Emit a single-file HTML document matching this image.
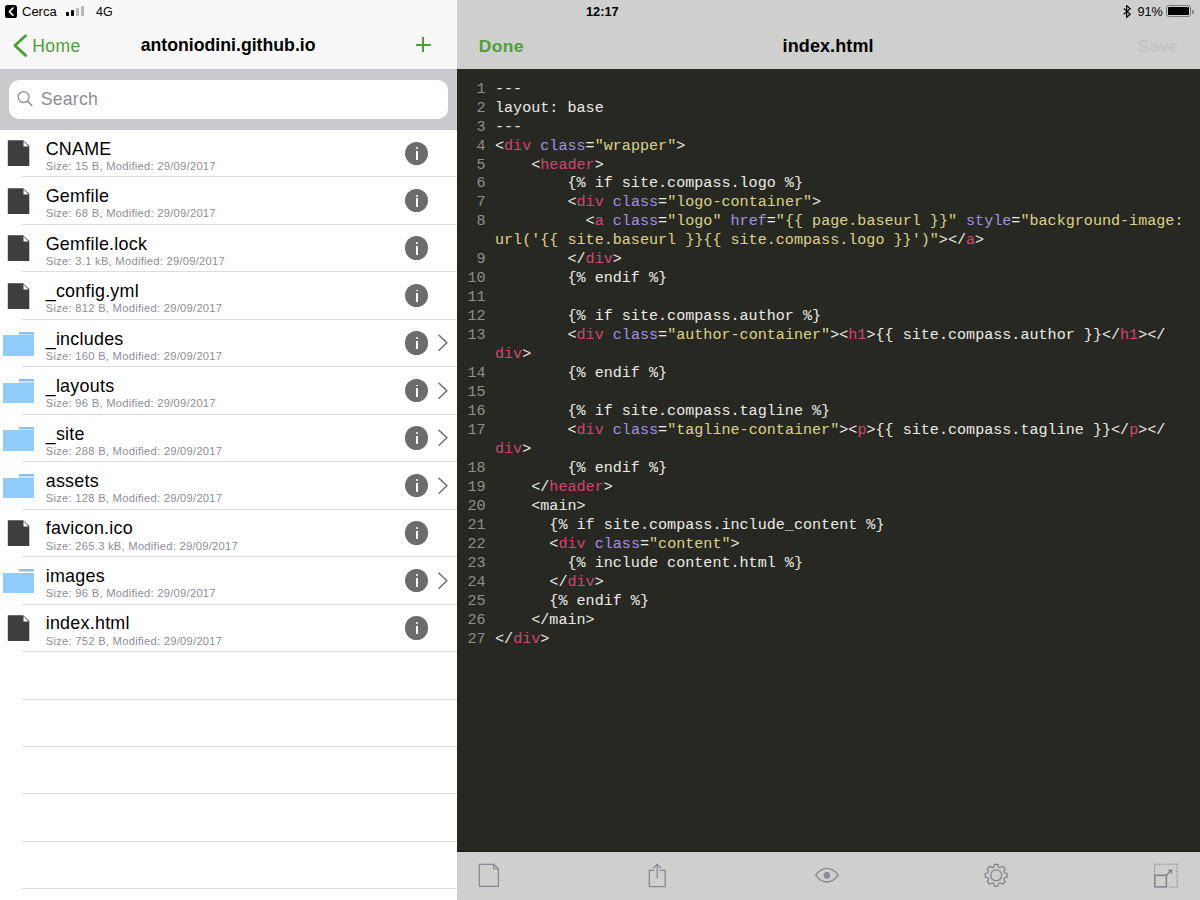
<!DOCTYPE html>
<html><head><meta charset="utf-8"><title>index.html</title>
<style>
*{margin:0;padding:0;box-sizing:border-box}
html,body{width:1200px;height:900px;overflow:hidden;background:#fff;font-family:"Liberation Sans",sans-serif}
body{position:relative}
.abs{position:absolute}
.tx{position:absolute;white-space:pre;line-height:1}
#left{position:absolute;left:0;top:0;width:456.5px;height:900px;background:#fff;overflow:hidden}
#lnav{position:absolute;left:0;top:0;width:456.5px;height:69px;background:#f8f8f8}
#searchbg{position:absolute;left:0;top:69px;width:456.5px;height:60.5px;background:#c9c9ce}
#sfield{position:absolute;left:9px;top:80px;width:439px;height:39px;background:#fff;border-radius:10px}
#rnav{position:absolute;left:456.5px;top:0;width:743.5px;height:69px;background:#cfcfcd}
#code{position:absolute;left:456.5px;top:69px;width:743.5px;height:783.5px;background:#272822}
#tbar{position:absolute;left:456.5px;top:851px;width:743.5px;height:49px;background:#cfcfcd;border-top:1px solid #1a1a16}
.sep{position:absolute;left:22px;width:434.5px;height:1px;background:#dcdcde}
.cl{position:absolute;left:495px;font-family:"Liberation Mono",monospace;font-size:15.1px;line-height:1;color:#ececE6;white-space:pre}
.ln{position:absolute;left:448px;width:37.5px;text-align:right;font-family:"Liberation Mono",monospace;font-size:15.1px;line-height:1;color:#8f908a;white-space:pre}
.t{color:#d4446f}.a{color:#a190e6}.s{color:#dbd486}
</style></head><body>
<div id="left">
<div id="lnav"></div>
<div id="searchbg"></div><div id="sfield"></div>
<div class="abs" style="left:4.6px;top:5px;width:12.9px;height:12.8px;background:#000;border-radius:2.6px"></div>
<svg class="abs" style="left:4.5px;top:5px" width="13" height="13" viewBox="0 0 13 13"><path d="M7.9 3.1 L4.4 6.6 L7.9 10.1" stroke="#fff" stroke-width="1.6" fill="none" stroke-linecap="round" stroke-linejoin="round"/></svg>
<div class="tx" style="left:22.00px;top:5.10px;font-size:13px;color:#000;font-weight:normal;">Cerca</div>

<div class="abs" style="left:66px;top:11.5px;width:3.3px;height:4.5px;background:#000;border-radius:0.8px"></div>
<div class="abs" style="left:71px;top:9.5px;width:3.3px;height:6.5px;background:#000;border-radius:0.8px"></div>
<div class="abs" style="left:76px;top:7.5px;width:3.3px;height:8.5px;background:#b8b8b8;border-radius:0.8px"></div>
<div class="abs" style="left:81px;top:5.5px;width:3.3px;height:10.5px;background:#b8b8b8;border-radius:0.8px"></div>
<div class="tx" style="left:96.00px;top:5.52px;font-size:12.5px;color:#000;font-weight:normal;">4G</div>

<svg class="abs" style="left:10px;top:30px" width="24" height="32" viewBox="0 0 24 32"><path d="M15.6 5.7 L4.9 15.5 L15.6 25.4" stroke="#4aa137" stroke-width="2.8" fill="none" stroke-linecap="round" stroke-linejoin="round"/></svg>
<div class="tx" style="left:32.20px;top:37.90px;font-size:17.6px;color:#4aa137;font-weight:normal;letter-spacing:0.35px;">Home</div>

<div class="tx" style="left:140.70px;top:37.42px;font-size:17.7px;color:#000;font-weight:bold;">antoniodini.github.io</div>

<div class="abs" style="left:415.5px;top:43.5px;width:15.3px;height:2px;background:#4aa137"></div>
<div class="abs" style="left:422px;top:37px;width:2px;height:14.8px;background:#4aa137"></div>
<svg class="abs" style="left:14px;top:88px" width="22" height="22" viewBox="0 0 22 22"><circle cx="9.6" cy="9.1" r="5.4" stroke="#8e8e93" stroke-width="1.3" fill="none"/><path d="M13.5 13 L17.8 17.4" stroke="#8e8e93" stroke-width="1.5" stroke-linecap="round"/></svg>
<div class="tx" style="left:40.80px;top:90.82px;font-size:17.7px;color:#8e8e93;font-weight:normal;letter-spacing:0.2px;">Search</div>

<div class="sep" style="top:176px"></div>
<svg class="abs" style="left:7px;top:140.20px" width="24" height="28" viewBox="0 0 24 28"><path d="M0.8 0.3 H16.1 L22.3 6 V25.9 H0.8 Z" fill="#3e3e41"/><path d="M16.5 1.3 V6.4 H21.4 Z" fill="#fff"/></svg>
<div class="tx" style="left:45.70px;top:140.75px;font-size:17.9px;color:#000;font-weight:normal;letter-spacing:0.25px;">CNAME</div>

<div class="tx" style="left:45.80px;top:161.02px;font-size:11.2px;color:#8e8e93;font-weight:normal;letter-spacing:0.26px;">Size: 15 B, Modified: 29/09/2017</div>

<div class="abs" style="left:405px;top:141.50px;width:23.4px;height:23.4px;border-radius:50%;background:#6c6c6e"></div>
<div class="abs" style="left:415.75px;top:147.20px;width:1.9px;height:1.9px;border-radius:50%;background:#fff"></div>
<div class="abs" style="left:415.85px;top:151.00px;width:1.7px;height:8.6px;background:#fff"></div>
<div class="sep" style="top:224px"></div>
<svg class="abs" style="left:7px;top:187.67px" width="24" height="28" viewBox="0 0 24 28"><path d="M0.8 0.3 H16.1 L22.3 6 V25.9 H0.8 Z" fill="#3e3e41"/><path d="M16.5 1.3 V6.4 H21.4 Z" fill="#fff"/></svg>
<div class="tx" style="left:45.70px;top:188.21px;font-size:17.9px;color:#000;font-weight:normal;letter-spacing:0.25px;">Gemfile</div>

<div class="tx" style="left:45.80px;top:208.49px;font-size:11.2px;color:#8e8e93;font-weight:normal;letter-spacing:0.26px;">Size: 68 B, Modified: 29/09/2017</div>

<div class="abs" style="left:405px;top:188.97px;width:23.4px;height:23.4px;border-radius:50%;background:#6c6c6e"></div>
<div class="abs" style="left:415.75px;top:194.67px;width:1.9px;height:1.9px;border-radius:50%;background:#fff"></div>
<div class="abs" style="left:415.85px;top:198.47px;width:1.7px;height:8.6px;background:#fff"></div>
<div class="sep" style="top:271px"></div>
<svg class="abs" style="left:7px;top:235.13px" width="24" height="28" viewBox="0 0 24 28"><path d="M0.8 0.3 H16.1 L22.3 6 V25.9 H0.8 Z" fill="#3e3e41"/><path d="M16.5 1.3 V6.4 H21.4 Z" fill="#fff"/></svg>
<div class="tx" style="left:45.70px;top:235.68px;font-size:17.9px;color:#000;font-weight:normal;letter-spacing:0.25px;">Gemfile.lock</div>

<div class="tx" style="left:45.80px;top:255.95px;font-size:11.2px;color:#8e8e93;font-weight:normal;letter-spacing:0.26px;">Size: 3.1 kB, Modified: 29/09/2017</div>

<div class="abs" style="left:405px;top:236.43px;width:23.4px;height:23.4px;border-radius:50%;background:#6c6c6e"></div>
<div class="abs" style="left:415.75px;top:242.13px;width:1.9px;height:1.9px;border-radius:50%;background:#fff"></div>
<div class="abs" style="left:415.85px;top:245.93px;width:1.7px;height:8.6px;background:#fff"></div>
<div class="sep" style="top:319px"></div>
<svg class="abs" style="left:7px;top:282.60px" width="24" height="28" viewBox="0 0 24 28"><path d="M0.8 0.3 H16.1 L22.3 6 V25.9 H0.8 Z" fill="#3e3e41"/><path d="M16.5 1.3 V6.4 H21.4 Z" fill="#fff"/></svg>
<div class="tx" style="left:45.70px;top:283.15px;font-size:17.9px;color:#000;font-weight:normal;letter-spacing:0.25px;">_config.yml</div>

<div class="tx" style="left:45.80px;top:303.42px;font-size:11.2px;color:#8e8e93;font-weight:normal;letter-spacing:0.26px;">Size: 812 B, Modified: 29/09/2017</div>

<div class="abs" style="left:405px;top:283.90px;width:23.4px;height:23.4px;border-radius:50%;background:#6c6c6e"></div>
<div class="abs" style="left:415.75px;top:289.60px;width:1.9px;height:1.9px;border-radius:50%;background:#fff"></div>
<div class="abs" style="left:415.85px;top:293.40px;width:1.7px;height:8.6px;background:#fff"></div>
<div class="sep" style="top:366px"></div>
<div class="abs" style="left:3px;top:335.17px;width:31px;height:20.5px;background:#8fccf9"></div>
<div class="abs" style="left:19px;top:331.67px;width:15px;height:2.2px;background:#87c2ee"></div>
<div class="abs" style="left:19px;top:333.87px;width:15px;height:1.3px;background:#c6e5fc"></div>
<svg class="abs" style="left:436px;top:333.37px" width="14" height="20" viewBox="0 0 14 20"><path d="M2.5 1.8 L10.8 9.75 L2.5 17.7" stroke="#6e6e72" stroke-width="1.5" fill="none"/></svg>
<div class="tx" style="left:45.70px;top:330.62px;font-size:17.9px;color:#000;font-weight:normal;letter-spacing:0.25px;">_includes</div>

<div class="tx" style="left:45.80px;top:350.89px;font-size:11.2px;color:#8e8e93;font-weight:normal;letter-spacing:0.26px;">Size: 160 B, Modified: 29/09/2017</div>

<div class="abs" style="left:405px;top:331.37px;width:23.4px;height:23.4px;border-radius:50%;background:#6c6c6e"></div>
<div class="abs" style="left:415.75px;top:337.07px;width:1.9px;height:1.9px;border-radius:50%;background:#fff"></div>
<div class="abs" style="left:415.85px;top:340.87px;width:1.7px;height:8.6px;background:#fff"></div>
<div class="sep" style="top:414px"></div>
<div class="abs" style="left:3px;top:382.63px;width:31px;height:20.5px;background:#8fccf9"></div>
<div class="abs" style="left:19px;top:379.13px;width:15px;height:2.2px;background:#87c2ee"></div>
<div class="abs" style="left:19px;top:381.33px;width:15px;height:1.3px;background:#c6e5fc"></div>
<svg class="abs" style="left:436px;top:380.83px" width="14" height="20" viewBox="0 0 14 20"><path d="M2.5 1.8 L10.8 9.75 L2.5 17.7" stroke="#6e6e72" stroke-width="1.5" fill="none"/></svg>
<div class="tx" style="left:45.70px;top:378.08px;font-size:17.9px;color:#000;font-weight:normal;letter-spacing:0.25px;">_layouts</div>

<div class="tx" style="left:45.80px;top:398.35px;font-size:11.2px;color:#8e8e93;font-weight:normal;letter-spacing:0.26px;">Size: 96 B, Modified: 29/09/2017</div>

<div class="abs" style="left:405px;top:378.83px;width:23.4px;height:23.4px;border-radius:50%;background:#6c6c6e"></div>
<div class="abs" style="left:415.75px;top:384.53px;width:1.9px;height:1.9px;border-radius:50%;background:#fff"></div>
<div class="abs" style="left:415.85px;top:388.33px;width:1.7px;height:8.6px;background:#fff"></div>
<div class="sep" style="top:461px"></div>
<div class="abs" style="left:3px;top:430.10px;width:31px;height:20.5px;background:#8fccf9"></div>
<div class="abs" style="left:19px;top:426.60px;width:15px;height:2.2px;background:#87c2ee"></div>
<div class="abs" style="left:19px;top:428.80px;width:15px;height:1.3px;background:#c6e5fc"></div>
<svg class="abs" style="left:436px;top:428.30px" width="14" height="20" viewBox="0 0 14 20"><path d="M2.5 1.8 L10.8 9.75 L2.5 17.7" stroke="#6e6e72" stroke-width="1.5" fill="none"/></svg>
<div class="tx" style="left:45.70px;top:425.55px;font-size:17.9px;color:#000;font-weight:normal;letter-spacing:0.25px;">_site</div>

<div class="tx" style="left:45.80px;top:445.82px;font-size:11.2px;color:#8e8e93;font-weight:normal;letter-spacing:0.26px;">Size: 288 B, Modified: 29/09/2017</div>

<div class="abs" style="left:405px;top:426.30px;width:23.4px;height:23.4px;border-radius:50%;background:#6c6c6e"></div>
<div class="abs" style="left:415.75px;top:432.00px;width:1.9px;height:1.9px;border-radius:50%;background:#fff"></div>
<div class="abs" style="left:415.85px;top:435.80px;width:1.7px;height:8.6px;background:#fff"></div>
<div class="sep" style="top:509px"></div>
<div class="abs" style="left:3px;top:477.57px;width:31px;height:20.5px;background:#8fccf9"></div>
<div class="abs" style="left:19px;top:474.07px;width:15px;height:2.2px;background:#87c2ee"></div>
<div class="abs" style="left:19px;top:476.27px;width:15px;height:1.3px;background:#c6e5fc"></div>
<svg class="abs" style="left:436px;top:475.77px" width="14" height="20" viewBox="0 0 14 20"><path d="M2.5 1.8 L10.8 9.75 L2.5 17.7" stroke="#6e6e72" stroke-width="1.5" fill="none"/></svg>
<div class="tx" style="left:45.70px;top:473.02px;font-size:17.9px;color:#000;font-weight:normal;letter-spacing:0.25px;">assets</div>

<div class="tx" style="left:45.80px;top:493.29px;font-size:11.2px;color:#8e8e93;font-weight:normal;letter-spacing:0.26px;">Size: 128 B, Modified: 29/09/2017</div>

<div class="abs" style="left:405px;top:473.77px;width:23.4px;height:23.4px;border-radius:50%;background:#6c6c6e"></div>
<div class="abs" style="left:415.75px;top:479.47px;width:1.9px;height:1.9px;border-radius:50%;background:#fff"></div>
<div class="abs" style="left:415.85px;top:483.27px;width:1.7px;height:8.6px;background:#fff"></div>
<div class="sep" style="top:556px"></div>
<svg class="abs" style="left:7px;top:519.94px" width="24" height="28" viewBox="0 0 24 28"><path d="M0.8 0.3 H16.1 L22.3 6 V25.9 H0.8 Z" fill="#3e3e41"/><path d="M16.5 1.3 V6.4 H21.4 Z" fill="#fff"/></svg>
<div class="tx" style="left:45.70px;top:520.48px;font-size:17.9px;color:#000;font-weight:normal;letter-spacing:0.25px;">favicon.ico</div>

<div class="tx" style="left:45.80px;top:540.76px;font-size:11.2px;color:#8e8e93;font-weight:normal;letter-spacing:0.26px;">Size: 265.3 kB, Modified: 29/09/2017</div>

<div class="abs" style="left:405px;top:521.24px;width:23.4px;height:23.4px;border-radius:50%;background:#6c6c6e"></div>
<div class="abs" style="left:415.75px;top:526.94px;width:1.9px;height:1.9px;border-radius:50%;background:#fff"></div>
<div class="abs" style="left:415.85px;top:530.74px;width:1.7px;height:8.6px;background:#fff"></div>
<div class="sep" style="top:604px"></div>
<div class="abs" style="left:3px;top:572.50px;width:31px;height:20.5px;background:#8fccf9"></div>
<div class="abs" style="left:19px;top:569.00px;width:15px;height:2.2px;background:#87c2ee"></div>
<div class="abs" style="left:19px;top:571.20px;width:15px;height:1.3px;background:#c6e5fc"></div>
<svg class="abs" style="left:436px;top:570.70px" width="14" height="20" viewBox="0 0 14 20"><path d="M2.5 1.8 L10.8 9.75 L2.5 17.7" stroke="#6e6e72" stroke-width="1.5" fill="none"/></svg>
<div class="tx" style="left:45.70px;top:567.95px;font-size:17.9px;color:#000;font-weight:normal;letter-spacing:0.25px;">images</div>

<div class="tx" style="left:45.80px;top:588.22px;font-size:11.2px;color:#8e8e93;font-weight:normal;letter-spacing:0.26px;">Size: 96 B, Modified: 29/09/2017</div>

<div class="abs" style="left:405px;top:568.70px;width:23.4px;height:23.4px;border-radius:50%;background:#6c6c6e"></div>
<div class="abs" style="left:415.75px;top:574.40px;width:1.9px;height:1.9px;border-radius:50%;background:#fff"></div>
<div class="abs" style="left:415.85px;top:578.20px;width:1.7px;height:8.6px;background:#fff"></div>
<div class="sep" style="top:651px"></div>
<svg class="abs" style="left:7px;top:614.87px" width="24" height="28" viewBox="0 0 24 28"><path d="M0.8 0.3 H16.1 L22.3 6 V25.9 H0.8 Z" fill="#3e3e41"/><path d="M16.5 1.3 V6.4 H21.4 Z" fill="#fff"/></svg>
<div class="tx" style="left:45.70px;top:615.42px;font-size:17.9px;color:#000;font-weight:normal;letter-spacing:0.25px;">index.html</div>

<div class="tx" style="left:45.80px;top:635.69px;font-size:11.2px;color:#8e8e93;font-weight:normal;letter-spacing:0.26px;">Size: 752 B, Modified: 29/09/2017</div>

<div class="abs" style="left:405px;top:616.17px;width:23.4px;height:23.4px;border-radius:50%;background:#6c6c6e"></div>
<div class="abs" style="left:415.75px;top:621.87px;width:1.9px;height:1.9px;border-radius:50%;background:#fff"></div>
<div class="abs" style="left:415.85px;top:625.67px;width:1.7px;height:8.6px;background:#fff"></div>
<div class="sep" style="top:699px"></div>
<div class="sep" style="top:746px"></div>
<div class="sep" style="top:793px"></div>
<div class="sep" style="top:841px"></div>
<div class="sep" style="top:888px"></div>
</div>
<div id="rnav"></div>
<div id="code"></div>
<div id="tbar"></div>
<div class="tx" style="left:586.00px;top:5.86px;font-size:12.8px;color:#000;font-weight:bold;">12:17</div>

<svg class="abs" style="left:1122px;top:4.5px" width="11" height="13" viewBox="0 0 11 13"><path d="M1.7 3.4 L8.2 9.2 L4.6 12.3 V0.6 L8.2 3.8 L1.7 9.3" stroke="#000" stroke-width="1.2" fill="none" stroke-linejoin="miter"/></svg>
<div class="tx" style="left:1137.50px;top:5.93px;font-size:12.6px;color:#000;font-weight:normal;">91%</div>

<div class="abs" style="left:1165.5px;top:5.3px;width:25.5px;height:12px;border:1px solid #7a7a7a;border-radius:2.5px"></div>
<div class="abs" style="left:1167.5px;top:7.3px;width:21.2px;height:8px;background:#000;border-radius:0.8px"></div>
<div class="abs" style="left:1192px;top:9.5px;width:1.6px;height:4px;background:#8a8a8a;border-radius:0 1px 1px 0"></div>
<div class="tx" style="left:478.80px;top:38.07px;font-size:17.4px;color:#4aa137;font-weight:bold;letter-spacing:0.4px;">Done</div>

<div class="tx" style="left:782.60px;top:36.86px;font-size:18.0px;color:#000;font-weight:bold;letter-spacing:0.1px;">index.html</div>

<div class="tx" style="left:1137.80px;top:38.24px;font-size:17.2px;color:#c2c2c2;font-weight:normal;letter-spacing:0.25px;">Save</div>

<div class="cl" style="top:81.63px">---</div>
<div class="ln" style="top:81.63px">1</div>
<div class="cl" style="top:100.60px">layout: base</div>
<div class="ln" style="top:100.60px">2</div>
<div class="cl" style="top:119.57px">---</div>
<div class="ln" style="top:119.57px">3</div>
<div class="cl" style="top:138.54px">&lt;<span class="t">div</span> <span class="a">class</span>=<span class="s">&quot;wrapper&quot;</span>&gt;</div>
<div class="ln" style="top:138.54px">4</div>
<div class="cl" style="top:157.51px">    &lt;<span class="t">header</span>&gt;</div>
<div class="ln" style="top:157.51px">5</div>
<div class="cl" style="top:176.48px">        {% if site.compass.logo %}</div>
<div class="ln" style="top:176.48px">6</div>
<div class="cl" style="top:195.45px">        &lt;<span class="t">div</span> <span class="a">class</span>=<span class="s">&quot;logo-container&quot;</span>&gt;</div>
<div class="ln" style="top:195.45px">7</div>
<div class="cl" style="top:214.42px">          &lt;<span class="t">a</span> <span class="a">class</span>=<span class="s">&quot;logo&quot;</span> <span class="a">href</span>=<span class="s">&quot;{{ page.baseurl }}&quot;</span> <span class="a">style</span>=<span class="s">&quot;background-image:</span></div>
<div class="ln" style="top:214.42px">8</div>
<div class="cl" style="top:233.39px"><span class="s">url(&#x27;{{ site.baseurl }}{{ site.compass.logo }}&#x27;)&quot;</span>&gt;&lt;/<span class="t">a</span>&gt;</div>
<div class="cl" style="top:252.36px">        &lt;/<span class="t">div</span>&gt;</div>
<div class="ln" style="top:252.36px">9</div>
<div class="cl" style="top:271.33px">        {% endif %}</div>
<div class="ln" style="top:271.33px">10</div>
<div class="cl" style="top:290.30px"></div>
<div class="ln" style="top:290.30px">11</div>
<div class="cl" style="top:309.27px">        {% if site.compass.author %}</div>
<div class="ln" style="top:309.27px">12</div>
<div class="cl" style="top:328.24px">        &lt;<span class="t">div</span> <span class="a">class</span>=<span class="s">&quot;author-container&quot;</span>&gt;&lt;<span class="t">h1</span>&gt;{{ site.compass.author }}&lt;/<span class="t">h1</span>&gt;&lt;/</div>
<div class="ln" style="top:328.24px">13</div>
<div class="cl" style="top:347.21px"><span class="t">div</span>&gt;</div>
<div class="cl" style="top:366.18px">        {% endif %}</div>
<div class="ln" style="top:366.18px">14</div>
<div class="cl" style="top:385.15px"></div>
<div class="ln" style="top:385.15px">15</div>
<div class="cl" style="top:404.12px">        {% if site.compass.tagline %}</div>
<div class="ln" style="top:404.12px">16</div>
<div class="cl" style="top:423.09px">        &lt;<span class="t">div</span> <span class="a">class</span>=<span class="s">&quot;tagline-container&quot;</span>&gt;&lt;<span class="t">p</span>&gt;{{ site.compass.tagline }}&lt;/<span class="t">p</span>&gt;&lt;/</div>
<div class="ln" style="top:423.09px">17</div>
<div class="cl" style="top:442.06px"><span class="t">div</span>&gt;</div>
<div class="cl" style="top:461.03px">        {% endif %}</div>
<div class="ln" style="top:461.03px">18</div>
<div class="cl" style="top:480.00px">    &lt;/<span class="t">header</span>&gt;</div>
<div class="ln" style="top:480.00px">19</div>
<div class="cl" style="top:498.97px">    &lt;main&gt;</div>
<div class="ln" style="top:498.97px">20</div>
<div class="cl" style="top:517.94px">      {% if site.compass.include_content %}</div>
<div class="ln" style="top:517.94px">21</div>
<div class="cl" style="top:536.91px">      &lt;<span class="t">div</span> <span class="a">class</span>=<span class="s">&quot;content&quot;</span>&gt;</div>
<div class="ln" style="top:536.91px">22</div>
<div class="cl" style="top:555.88px">        {% include content.html %}</div>
<div class="ln" style="top:555.88px">23</div>
<div class="cl" style="top:574.85px">      &lt;/<span class="t">div</span>&gt;</div>
<div class="ln" style="top:574.85px">24</div>
<div class="cl" style="top:593.82px">      {% endif %}</div>
<div class="ln" style="top:593.82px">25</div>
<div class="cl" style="top:612.79px">    &lt;/main&gt;</div>
<div class="ln" style="top:612.79px">26</div>
<div class="cl" style="top:631.76px">&lt;/<span class="t">div</span>&gt;</div>
<div class="ln" style="top:631.76px">27</div>
<svg class="abs" style="left:470px;top:855px" width="730" height="45" viewBox="470 855 730 45">
<g stroke="#85888c" stroke-width="1.3" fill="none" stroke-linejoin="miter">
<path d="M479.3 864.3 H493.7 L498.4 869 V886.3 H479.3 Z" stroke-width="1.2"/>
<path d="M493.7 864.3 V867.4 Q493.7 869 495.3 869 H498.4" stroke-width="1.2"/>
<path d="M654.1 870.3 H649.3 V886.6 H665.2 V870.3 H659.5"/>
<path d="M657.2 878.6 V864.8 M653.3 868.1 L657.2 864.3 L661.1 868.1" stroke-width="1.2"/>
<path d="M815.6 875.2 C819.5 869.7 824 868.4 826.9 868.4 C829.8 868.4 834.3 869.7 838.2 875.2 C834.3 880.7 829.8 882 826.9 882 C824 882 819.5 880.7 815.6 875.2 Z"/>
</g>
<circle cx="826.9" cy="875.4" r="3.3" fill="#8a8e96"/>
</svg>
<svg class="abs" style="left:980px;top:858px" width="34" height="34" viewBox="980 858 34 34"><path d="M993.90 866.70 L994.38 864.45 A11.0 11.0 0 0 1 998.02 864.45 L998.50 866.70 Q999.26 867.91 1000.65 867.59 L1002.59 866.34 A11.0 11.0 0 0 1 1005.16 868.91 L1003.91 870.85 Q1003.59 872.24 1004.80 873.00 L1007.05 873.48 A11.0 11.0 0 0 1 1007.05 877.12 L1004.80 877.60 Q1003.59 878.36 1003.91 879.75 L1005.16 881.69 A11.0 11.0 0 0 1 1002.59 884.26 L1000.65 883.01 Q999.26 882.69 998.50 883.90 L998.02 886.15 A11.0 11.0 0 0 1 994.38 886.15 L993.90 883.90 Q993.14 882.69 991.75 883.01 L989.81 884.26 A11.0 11.0 0 0 1 987.24 881.69 L988.49 879.75 Q988.81 878.36 987.60 877.60 L985.35 877.12 A11.0 11.0 0 0 1 985.35 873.48 L987.60 873.00 Q988.81 872.24 988.49 870.85 L987.24 868.91 A11.0 11.0 0 0 1 989.81 866.34 L991.75 867.59 Q993.14 867.91 993.90 866.70 Z" stroke="#818387" stroke-width="1.25" fill="none" stroke-linejoin="round"/><circle cx="996.2" cy="875.3" r="5.5" stroke="#818387" stroke-width="1.25" fill="none"/></svg>
<svg class="abs" style="left:1150px;top:860px" width="30" height="30" viewBox="1150 860 30 30"><rect x="1154.8" y="875.3" width="11.6" height="11.6" stroke="#818387" stroke-width="1.5" fill="none"/><g fill="#85888c"><rect x="1154.00" y="863.6" width="1.2" height="1.2"/><rect x="1156.42" y="863.6" width="1.2" height="1.2"/><rect x="1158.84" y="863.6" width="1.2" height="1.2"/><rect x="1161.26" y="863.6" width="1.2" height="1.2"/><rect x="1163.68" y="863.6" width="1.2" height="1.2"/><rect x="1166.10" y="863.6" width="1.2" height="1.2"/><rect x="1168.52" y="863.6" width="1.2" height="1.2"/><rect x="1170.94" y="863.6" width="1.2" height="1.2"/><rect x="1173.36" y="863.6" width="1.2" height="1.2"/><rect x="1175.78" y="863.6" width="1.2" height="1.2"/><rect x="1176.6" y="863.60" width="1.2" height="1.2"/><rect x="1176.6" y="866.02" width="1.2" height="1.2"/><rect x="1176.6" y="868.44" width="1.2" height="1.2"/><rect x="1176.6" y="870.86" width="1.2" height="1.2"/><rect x="1176.6" y="873.28" width="1.2" height="1.2"/><rect x="1176.6" y="875.70" width="1.2" height="1.2"/><rect x="1176.6" y="878.12" width="1.2" height="1.2"/><rect x="1176.6" y="880.54" width="1.2" height="1.2"/><rect x="1176.6" y="882.96" width="1.2" height="1.2"/><rect x="1176.6" y="885.38" width="1.2" height="1.2"/><rect x="1169.30" y="886.4" width="1.2" height="1.2"/><rect x="1171.72" y="886.4" width="1.2" height="1.2"/><rect x="1174.14" y="886.4" width="1.2" height="1.2"/><rect x="1176.56" y="886.4" width="1.2" height="1.2"/><rect x="1154.0" y="866.00" width="1.2" height="1.2"/><rect x="1154.0" y="868.42" width="1.2" height="1.2"/><rect x="1154.0" y="870.84" width="1.2" height="1.2"/><rect x="1154.0" y="873.26" width="1.2" height="1.2"/></g><path d="M1166.4 875.3 L1170.4 871.3" stroke="#818387" stroke-width="1.3"/><path d="M1167.6 869.6 H1172.2 V874.2 Z" fill="#818387"/></svg>
</body></html>
